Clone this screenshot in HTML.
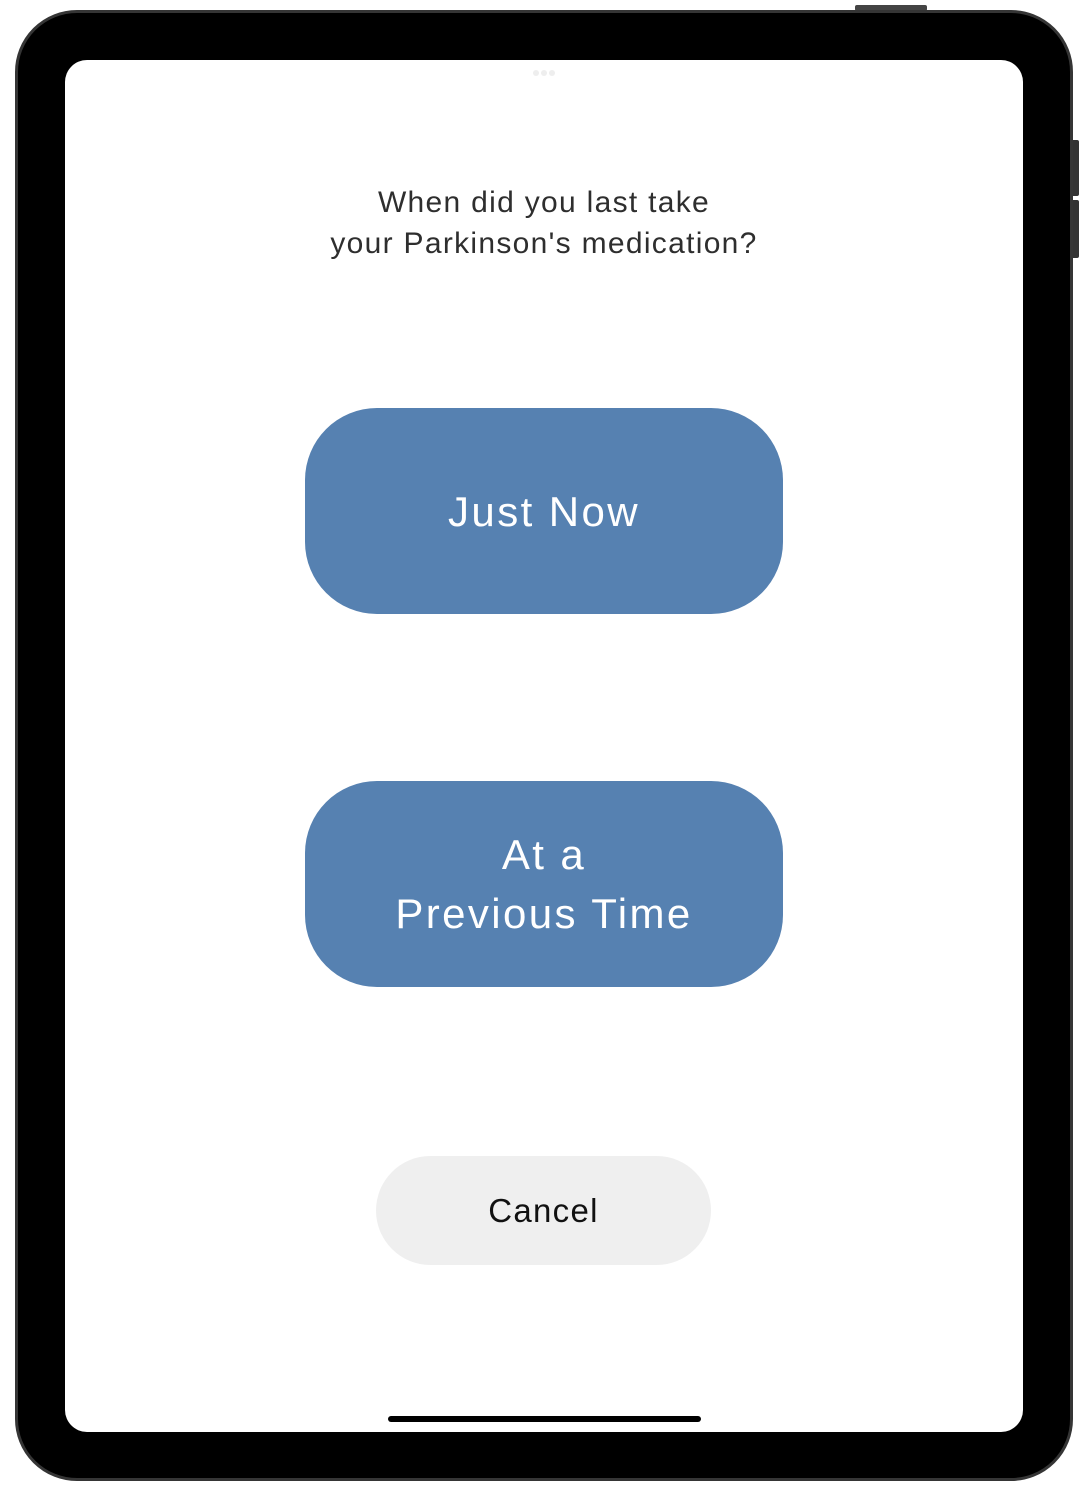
<!DOCTYPE html>
<html><head><meta charset="utf-8"><style>
html,body{margin:0;padding:0;background:#fff;width:1088px;height:1495px;overflow:hidden;font-family:"Liberation Sans",sans-serif}
.abs{position:absolute}
.frame{left:15px;top:10px;width:1058px;height:1471px;border-radius:62px;background:#000;box-sizing:border-box;border:3px solid #353535}
.screen{left:65px;top:60px;width:958px;height:1372px;border-radius:22px;background:#fff}
.btn{background:#5681b1;color:#fff;display:flex;align-items:center;justify-content:center;text-align:center;font-size:42px;line-height:59px;border-radius:72px;letter-spacing:2.4px}
</style></head><body>
<div class="abs" style="left:855px;top:5px;width:72px;height:6px;background:#444;border-radius:2px"></div>
<div class="abs" style="left:1071px;top:140px;width:8px;height:56px;background:#333;border-radius:2px"></div>
<div class="abs" style="left:1071px;top:200px;width:8px;height:58px;background:#333;border-radius:2px"></div>
<div class="abs frame"></div>
<div class="abs screen"></div>
<div class="abs" style="left:533px;top:70px;width:6px;height:6px;border-radius:50%;background:#eee"></div>
<div class="abs" style="left:541px;top:70px;width:6px;height:6px;border-radius:50%;background:#eee"></div>
<div class="abs" style="left:549px;top:70px;width:6px;height:6px;border-radius:50%;background:#eee"></div>
<div class="abs" style="left:194px;top:182px;width:700px;text-align:center;font-size:30px;line-height:41px;color:#2e2e2e;letter-spacing:1.3px">When did you last take<br>your Parkinson's medication?</div>
<div class="abs btn" style="left:305px;top:408px;width:478px;height:206px">Just Now</div>
<div class="abs btn" style="left:305px;top:781px;width:478px;height:206px">At a<br>Previous Time</div>
<div class="abs" style="left:376px;top:1156px;width:335px;height:109px;border-radius:55px;background:#efefef;color:#111;font-size:33px;letter-spacing:1.3px;display:flex;align-items:center;justify-content:center">Cancel</div>
<div class="abs" style="left:388px;top:1416px;width:313px;height:6px;border-radius:3px;background:#000"></div>
</body></html>
